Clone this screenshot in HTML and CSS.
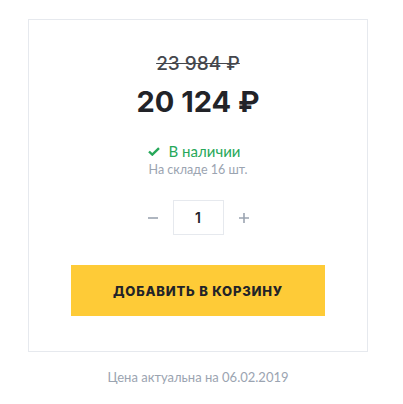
FILE: index.html
```html
<!DOCTYPE html>
<html lang="ru">
<head>
<meta charset="utf-8">
<link rel="stylesheet" href="styles.css">
</head>
<body>
<div class="wrap">
  <div class="card">
    <div class="old-price">23 984 ₽</div>
    <div class="price">20 124 ₽</div>
    <div class="stock">
      <svg class="check" width="12" height="9" viewBox="0 0 12 9"><path d="M1 4.5 L4.3 7.6 L11 1.2" fill="none" stroke="#27a85a" stroke-width="2.4"/></svg>
      <span>В наличии</span>
    </div>
    <div class="count">На складе 16 шт.</div>
    <div class="qty">
      <svg class="qbtn" width="10" height="10" viewBox="0 0 10 10"><path d="M0 5 H10" stroke="#9ba4b1" stroke-width="1.6"/></svg>
      <div class="qbox">1</div>
      <svg class="qbtn" width="10" height="10" viewBox="0 0 10 10"><path d="M0 5 H10 M5 0 V10" stroke="#9ba4b1" stroke-width="1.6"/></svg>
    </div>
    <button class="buy">ДОБАВИТЬ В КОРЗИНУ</button>
  </div>
  <div class="note">Цена актуальна на 06.02.2019</div>
</div>
</body>
</html>
```
FILE: styles.css
```css
html, body { margin: 0; padding: 0; background: #fff; }
body { font-family: "Inter", "Lato", sans-serif; color: #222328; }
.wrap { padding: 19px 0 0 28px; width: 340px; }
.card {
  box-sizing: border-box;
  width: 340px;
  height: 333px;
  border: 1px solid #e6e9ee;
  padding: 32px 43px 0;
  display: flex;
  flex-direction: column;
  align-items: center;
}
.old-price {
  font-size: 19px; line-height: 24px; font-weight: 500;
  color: #45474d; text-decoration: line-through;
}
.price {
  margin-top: 9px;
  font-size: 29px; line-height: 34px; font-weight: 700;
  color: #222328;
}
.stock {
  margin-top: 22px;
  display: flex; align-items: center; gap: 9px;
  margin-left: -8px;
  font-family: "Lato", sans-serif;
  font-size: 15px; line-height: 20px; color: #27a85a;
}
.count {
  font-family: "Lato", sans-serif;
  font-size: 12.5px; line-height: 18px; color: #9ba4b1;
}
.qty {
  margin-top: 21px;
  display: flex; align-items: center; gap: 15px;
}
.qbtn { display: block; }
.qbox {
  box-sizing: border-box; width: 51px; height: 35px;
  border: 1px solid #e6e9ee;
  display: flex; align-items: center; justify-content: center;
  font-size: 14px; font-weight: 600; color: #222328;
}
.buy {
  margin-top: 30px;
  width: 254px; height: 51px;
  border: 0; background: #fecb37;
  font-family: "Inter", sans-serif;
  font-size: 13px; font-weight: 800; letter-spacing: 0.8px;
  color: #222328;
}
.note {
  margin-top: 16px;
  text-align: center;
  font-family: "Lato", sans-serif;
  font-size: 13px; line-height: 18px; color: #9ba4b1;
}
```
